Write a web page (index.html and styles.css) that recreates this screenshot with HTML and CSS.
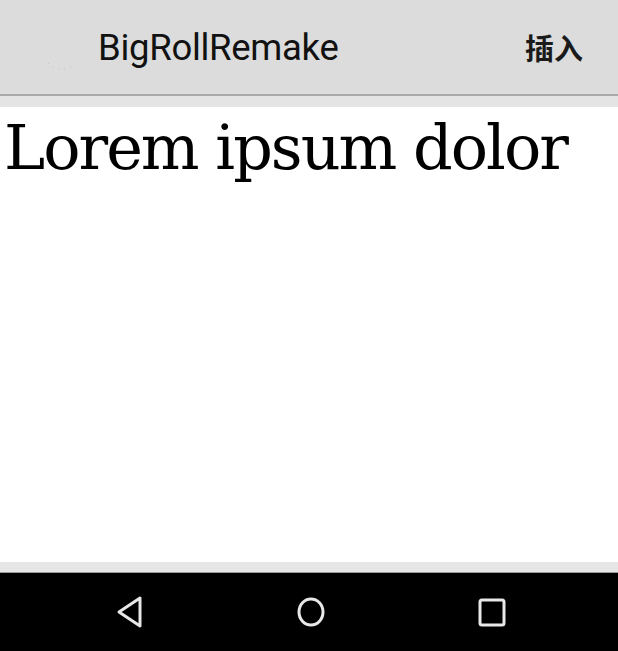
FILE: index.html
```html
<!DOCTYPE html>
<html>
<head>
<meta charset="utf-8">
<link rel="stylesheet" href="styles.css">
</head>
<body>
<div class="app">
  <header class="bar">
    <div class="logo"><svg width="60" height="40" viewBox="0 0 60 40"><path d="M14 26 Q24 36 38 30" fill="none" stroke="#bdbdbd" stroke-width="1" stroke-dasharray="1 5"/></svg></div>
    <div class="title">BigRollRemake</div>
    <div class="action">插入</div>
  </header>
  <div class="strip"></div>
  <main class="content">
    <p class="lorem">Lorem ipsum dolor</p>
  </main>
  <div class="strip bottom"></div>
  <nav class="nav">
    <svg class="ico" width="32" height="34" viewBox="0 0 32 34"><path d="M26 3 L5 17 L26 31 Z" fill="none" stroke="#e8e8e8" stroke-width="3" stroke-linejoin="round"/></svg>
    <svg class="ico" width="32" height="34" viewBox="0 0 32 34"><ellipse cx="16" cy="17" rx="12" ry="13" fill="none" stroke="#e8e8e8" stroke-width="3"/></svg>
    <svg class="ico" width="32" height="34" viewBox="0 0 32 34"><rect x="4" y="5" width="24" height="25" rx="2" fill="none" stroke="#e8e8e8" stroke-width="3"/></svg>
  </nav>
</div>
</body>
</html>
```
FILE: styles.css
```css
html, body { margin: 0; padding: 0; }
body { width: 618px; height: 651px; overflow: hidden; background: #fff; }
.app { display: flex; flex-direction: column; height: 651px; }
.bar {
  height: 96px;
  background: #dcdcdc;
  border-bottom: 2px solid #a9a9a9;
  display: flex;
  align-items: center;
  box-sizing: border-box;
  padding: 0 35px 0 34px;
}
.logo { width: 64px; height: 40px; margin-top: 20px; }
.title {
  font-family: Roboto, "Noto Sans", sans-serif;
  font-size: 36.5px;
  color: #111;
  flex: 1;
  letter-spacing: -0.3px;
}
.action {
  font-family: "Noto Sans CJK SC", sans-serif;
  font-weight: 700;
  font-size: 29px;
  color: #1a1a1a;
}
.strip { height: 11px; background: #e4e4e4; }
.strip.bottom { height: 10px; background: #e6e6e6; border-bottom: 1px solid #9a9a9a; }
.content { flex: 1; background: #fff; }
.lorem {
  margin: 0;
  padding-left: 4px;
  font-family: "DejaVu Serif", serif;
  font-size: 62px;
  letter-spacing: -2px;
  line-height: 82px;
  color: #000;
}
.nav {
  height: 78px;
  background: #000;
  display: flex;
  align-items: center;
  gap: 149px;
  padding: 0 0 0 114px;
}
.ico { display: block; }
```
